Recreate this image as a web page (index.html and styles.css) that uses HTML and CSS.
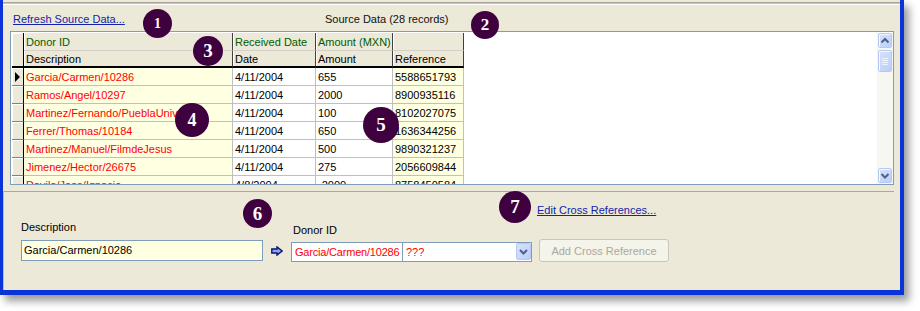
FILE: index.html
```html
<!DOCTYPE html>
<html lang="en">
  <head>
    <meta charset="UTF-8" />
    <title>Source Data</title>
    <link rel="stylesheet" href="styles.css">
  </head>
  <body>
    <div class="screen">
      <div class="window">
        <div class="top-lines"></div>

        <div class="source-bar">
          <a class="link" href="#">Refresh Source Data...</a>
          <span class="source-title">Source Data (28 records)</span>
        </div>

        <div class="grid-box">
          <div class="grid">
            <div class="sel sel-head"></div>
            <div class="head head-top">Donor ID</div>
            <div class="head head-top">Received Date</div>
            <div class="head head-top">Amount (MXN)</div>
            <div class="head head-top"></div>
            <div class="head head-bottom">Description</div>
            <div class="head head-bottom">Date</div>
            <div class="head head-bottom">Amount</div>
            <div class="head head-bottom">Reference</div>

            <div class="sel current"><span class="pointer"></span></div>
            <div class="cell desc">Garcia/Carmen/10286</div>
            <div class="cell">4/11/2004</div>
            <div class="cell">655</div>
            <div class="cell ref">5588651793</div>

            <div class="sel"></div>
            <div class="cell desc">Ramos/Angel/10297</div>
            <div class="cell">4/11/2004</div>
            <div class="cell">2000</div>
            <div class="cell ref">8900935116</div>

            <div class="sel"></div>
            <div class="cell desc">Martinez/Fernando/PueblaUniv</div>
            <div class="cell">4/11/2004</div>
            <div class="cell">100</div>
            <div class="cell ref">8102027075</div>

            <div class="sel"></div>
            <div class="cell desc">Ferrer/Thomas/10184</div>
            <div class="cell">4/11/2004</div>
            <div class="cell">650</div>
            <div class="cell ref">1636344256</div>

            <div class="sel"></div>
            <div class="cell desc">Martinez/Manuel/FilmdeJesus</div>
            <div class="cell">4/11/2004</div>
            <div class="cell">500</div>
            <div class="cell ref">9890321237</div>

            <div class="sel"></div>
            <div class="cell desc">Jimenez/Hector/26675</div>
            <div class="cell">4/11/2004</div>
            <div class="cell">275</div>
            <div class="cell ref">2056609844</div>

            <div class="sel"></div>
            <div class="cell desc">Davila/Jose/Ignacio</div>
            <div class="cell">4/8/2004</div>
            <div class="cell">-2000</div>
            <div class="cell ref">8758450584</div>
          </div>

          <div class="grid-empty"></div>

          <div class="scrollbar">
            <div class="sb-btn">
              <svg width="14" height="15" viewBox="0 0 14 15"><polyline points="3.5,9.5 7,6 10.5,9.5" fill="none" stroke="#4d6185" stroke-width="2"/></svg>
            </div>
            <div class="sb-thumb">
              <svg width="14" height="22" viewBox="0 0 14 22"><g stroke="#eef3ff" stroke-width="1"><line x1="4" y1="8.5" x2="10" y2="8.5"/><line x1="4" y1="10.5" x2="10" y2="10.5"/><line x1="4" y1="12.5" x2="10" y2="12.5"/><line x1="4" y1="14.5" x2="10" y2="14.5"/></g></svg>
            </div>
            <div class="sb-btn sb-down">
              <svg width="14" height="15" viewBox="0 0 14 15"><polyline points="3.5,6 7,9.5 10.5,6" fill="none" stroke="#4d6185" stroke-width="2"/></svg>
            </div>
          </div>
        </div>

        <div class="xref-panel">
          <div class="edit-row">
            <a class="link" href="#">Edit Cross References...</a>
          </div>
          <div class="fields">
            <div class="field field-desc">
              <div class="field-label">Description</div>
              <div class="text-input">Garcia/Carmen/10286</div>
            </div>
            <svg class="map-arrow" width="12" height="10" viewBox="0 0 12 10">
              <path d="M0.8,3 H6 V0.9 L11.2,5 L6,9.1 V7 H0.8 Z" fill="#8ea4ea" stroke="#0b1670" stroke-width="1.4" stroke-linejoin="miter"/>
            </svg>
            <div class="field field-donor">
              <div class="field-label">Donor ID</div>
              <div class="combo">
                <span class="combo-main">Garcia/Carmen/10286</span>
                <span class="combo-extra">???</span>
                <span class="combo-btn">
                  <svg width="15" height="17" viewBox="0 0 15 17"><polyline points="4,7 7.5,10.5 11,7" fill="none" stroke="#4d6185" stroke-width="2"/></svg>
                </span>
              </div>
            </div>
            <button class="add-btn" disabled>Add Cross Reference</button>
          </div>
        </div>
      </div>

      <!-- callout numbers -->
      <div class="badge badge-1">1</div>
      <div class="badge badge-2">2</div>
      <div class="badge badge-3">3</div>
      <div class="badge badge-4">4</div>
      <div class="badge badge-5">5</div>
      <div class="badge badge-6">6</div>
      <div class="badge badge-7">7</div>
    </div>
  </body>
</html>
```

FILE: styles.css
```css
body {
  margin: 0;
  background: #fff;
  font-family: "Liberation Sans", Arial, sans-serif;
  font-size: 11px;
  color: #000;
}

.screen {
  position: relative;
  width: 920px;
  height: 311px;
}

.window {
  width: 904px;
  height: 295px;
  box-sizing: border-box;
  background: #ece9d8;
  border-left: 3px solid #0a34d8;
  border-right: 4px solid #0a34d8;
  border-bottom: 5px solid #0a34d8;
  box-shadow: 5px 6px 8px rgba(0, 0, 0, 0.4);
  display: flex;
  flex-direction: column;
}

.top-lines {
  height: 6px;
  background: linear-gradient(
    #ece9d8 0, #ece9d8 2px,
    #aca899 2px, #aca899 3px,
    #c8c4b4 3px, #c8c4b4 4px,
    #fff 4px, #fff 5px,
    #ece9d8 5px
  );
}

.link {
  color: #1424a8;
  text-decoration: underline;
}

.source-bar {
  height: 25px;
  box-sizing: border-box;
  padding: 6px 0 0 10px;
  line-height: 14px;
  display: grid;
  grid-template-columns: 312px auto;
  align-items: start;
}

.source-title {
  color: #111;
}

/* datasheet */
.grid-box {
  height: 154px;
  margin: 0 6px 0 7px;
  box-sizing: border-box;
  border: 1px solid #7f9db9;
  background: #fff;
  padding: 1px 0 0 1px;
  display: flex;
  overflow: hidden;
}

.grid {
  display: grid;
  grid-template-columns: 12px 209px 83px 77px 71px;
  grid-template-rows: 18px 17px;
  grid-auto-rows: 18px;
  align-content: start;
  flex: none;
}

.grid > div {
  box-sizing: border-box;
  line-height: 18px;
  padding: 0 2px;
  white-space: nowrap;
  overflow: hidden;
}

.sel {
  background: #ece9d8;
  border-right: 1px solid #000;
  border-bottom: 1px solid #808080;
  box-shadow: inset 1px 1px #fff;
  position: relative;
}

.sel-head {
  grid-row: span 2;
  border-bottom: 2px solid #000;
}

.pointer {
  position: absolute;
  left: 3px;
  top: 4px;
  border-left: 5px solid #000;
  border-top: 5px solid transparent;
  border-bottom: 5px solid transparent;
}

.head {
  background: #ece9d8;
  border-right: 1px solid #404040;
  box-shadow: inset 1px 0 #fff;
}

.head-top {
  color: #005c00;
  border-bottom: 1px solid #d4d0c8;
}

.head-bottom {
  border-bottom: 2px solid #000;
  line-height: 16px !important;
}

.cell {
  border-right: 1px solid #c0c0c0;
  border-bottom: 1px solid #c0c0c0;
}

.desc {
  background: #ffffe1;
  color: #f00;
}

.ref {
  background: #ffffe1;
}

.grid-empty {
  flex: 1;
}

.scrollbar {
  width: 16px;
  flex: none;
  background: #f7f7f2;
  display: flex;
  flex-direction: column;
  align-items: center;
}

.sb-btn,
.sb-thumb {
  width: 14px;
  box-sizing: border-box;
  border: 1px solid #b6c8f3;
  border-radius: 2px;
  background: linear-gradient(135deg, #d6e2fd, #bccff9);
  box-shadow: inset 1px 1px #f4f7ff;
}

.sb-btn {
  height: 15px;
}

.sb-btn svg,
.sb-thumb svg {
  display: block;
  margin: -1px;
}

.sb-thumb {
  height: 22px;
  margin-top: 2px;
}

.sb-down {
  margin-top: auto;
  margin-bottom: 1px;
}

/* cross reference panel */
.xref-panel {
  flex: 1;
  margin: 6px 6px 0 0;
  border-top: 1px solid #aca899;
  border-left: 1px solid #c0bcac;
}

.edit-row {
  margin-top: 11px;
  padding-left: 533px;
  line-height: 14px;
}

.fields {
  display: flex;
  align-items: flex-start;
  margin-top: 3px;
}

.field-label {
  line-height: 14px;
}

.field-desc {
  margin-left: 17px;
}

.field-desc .field-label {
  margin-bottom: 6px;
}

.text-input {
  width: 242px;
  height: 21px;
  box-sizing: border-box;
  border: 1px solid #7f9db9;
  background: #ffffe1;
  padding-left: 2px;
  line-height: 19px;
}

.map-arrow {
  margin: 26px 8px 0;
  flex: none;
}

.field-donor {
  margin-top: 3px;
}

.field-donor .field-label {
  margin-bottom: 5px;
  padding-left: 2px;
}

.combo {
  width: 241px;
  height: 20px;
  box-sizing: border-box;
  border: 1px solid #7f9db9;
  background: #fff;
  display: flex;
  color: #f00;
  line-height: 18px;
}

.combo-main {
  width: 111px;
  box-sizing: border-box;
  padding-left: 3px;
  border-right: 1px solid #7f9db9;
  letter-spacing: -0.2px;
  white-space: nowrap;
}

.combo-extra {
  padding-left: 3px;
}

.combo-btn {
  margin-left: auto;
  width: 15px;
  height: 17px;
  border-radius: 2px;
  background: linear-gradient(135deg, #d6e2fd, #bccff9);
  border: 1px solid #b6c8f3;
  box-sizing: border-box;
}

.combo-btn svg {
  display: block;
  margin: -1px;
}

.add-btn {
  margin: 19px 0 0 7px;
  width: 130px;
  height: 23px;
  border: 1px solid #c9c7ba;
  border-radius: 3px;
  background: #f5f4ea;
  color: #aca899;
  font-family: "Liberation Sans", Arial, sans-serif;
  font-size: 11px;
  padding: 0;
}

/* callouts */
.badge {
  position: absolute;
  border-radius: 50%;
  background: #3f003f;
  color: #fff;
  font-family: "Liberation Serif", "DejaVu Serif", serif;
  font-weight: bold;
  display: flex;
  align-items: center;
  justify-content: center;
}

.badge-1 { left: 143px; top: 9px; width: 29px; height: 29px; font-size: 14px; }
.badge-2 { left: 471px; top: 11px; width: 28px; height: 28px; font-size: 17px; }
.badge-3 { left: 193px; top: 36px; width: 30px; height: 30px; font-size: 19px; }
.badge-4 { left: 175px; top: 103px; width: 34px; height: 34px; font-size: 18px; }
.badge-5 { left: 363px; top: 107px; width: 36px; height: 36px; font-size: 19px; }
.badge-6 { left: 243px; top: 199px; width: 29px; height: 29px; font-size: 19px; }
.badge-7 { left: 499px; top: 191px; width: 32px; height: 32px; font-size: 19px; }
```
